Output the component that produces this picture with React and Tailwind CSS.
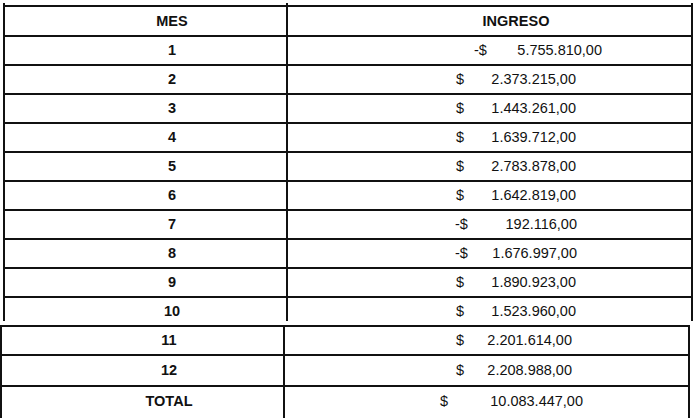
import React from 'react';

const upperRows = [
    { mes: '1', sign: '-$', amount: '5.755.810,00', ml: 'ml-[186px]', w: 'w-[128px]' },
    { mes: '2', sign: '$', amount: '2.373.215,00', ml: 'ml-[168px]', w: 'w-[120px]' },
    { mes: '3', sign: '$', amount: '1.443.261,00', ml: 'ml-[168px]', w: 'w-[120px]' },
    { mes: '4', sign: '$', amount: '1.639.712,00', ml: 'ml-[168px]', w: 'w-[120px]' },
    { mes: '5', sign: '$', amount: '2.783.878,00', ml: 'ml-[168px]', w: 'w-[120px]' },
    { mes: '6', sign: '$', amount: '1.642.819,00', ml: 'ml-[168px]', w: 'w-[120px]' },
    { mes: '7', sign: '-$', amount: '192.116,00', ml: 'ml-[167px]', w: 'w-[122px]' },
    { mes: '8', sign: '-$', amount: '1.676.997,00', ml: 'ml-[167px]', w: 'w-[122px]' },
    { mes: '9', sign: '$', amount: '1.890.923,00', ml: 'ml-[168px]', w: 'w-[120px]' },
];

const Amount = ({ sign, amount, ml, w }) => (
    <div className={`flex justify-between ${ml} ${w}`}>
        <span>{sign}</span>
        <span>{amount}</span>
    </div>
);

const Row = ({ height, top = true, pad = '', mes, children }) => (
    <div className={`flex ${height} ${top ? 'border-t-2 border-[#111]' : ''}`}>
        <div className={`w-[283px] border-l-2 border-[#111] flex items-center justify-center pl-[53px] font-bold ${pad}`}>
            {mes}
        </div>
        <div className={`w-[407px] border-l-2 border-r-2 border-[#111] flex items-center ${pad}`}>
            {children}
        </div>
    </div>
);

const App = () => {
    return (
        <div
            className="w-[698px] h-[418px] overflow-hidden bg-white text-[#111] text-[14.5px] leading-none"
            style={{ fontFamily: '"Liberation Sans", Arial, sans-serif' }}
        >
            {/* upper block: header + months 1-10 */}
            <div className="mt-[3px] ml-[3px] w-[690px]">
                <Row height="h-[2px]" top={false} />
                <Row height="h-[30px]" mes="MES">
                    <div className="w-full text-center pl-[53px] font-bold">INGRESO</div>
                </Row>
                {upperRows.map((r) => (
                    <Row key={r.mes} height="h-[29px]" mes={r.mes}>
                        <Amount {...r} />
                    </Row>
                ))}
                <Row height="h-[25px]" pad="pt-[3px]" mes="10">
                    <Amount sign="$" amount="1.523.960,00" ml="ml-[168px]" w="w-[120px]" />
                </Row>
            </div>

            {/* lower block, pasted slightly offset */}
            <div className="mt-[4px] w-[690px]">
                <Row height="h-[29px]" mes="11">
                    <Amount sign="$" amount="2.201.614,00" ml="ml-[171px]" w="w-[116px]" />
                </Row>
                <Row height="h-[31px]" mes="12">
                    <Amount sign="$" amount="2.208.988,00" ml="ml-[171px]" w="w-[116px]" />
                </Row>
                <Row height="h-[33px]" pad="pb-[3px]" mes="TOTAL">
                    <Amount sign="$" amount="10.083.447,00" ml="ml-[155px]" w="w-[143px]" />
                </Row>
            </div>
        </div>
    );
};

export default App;
